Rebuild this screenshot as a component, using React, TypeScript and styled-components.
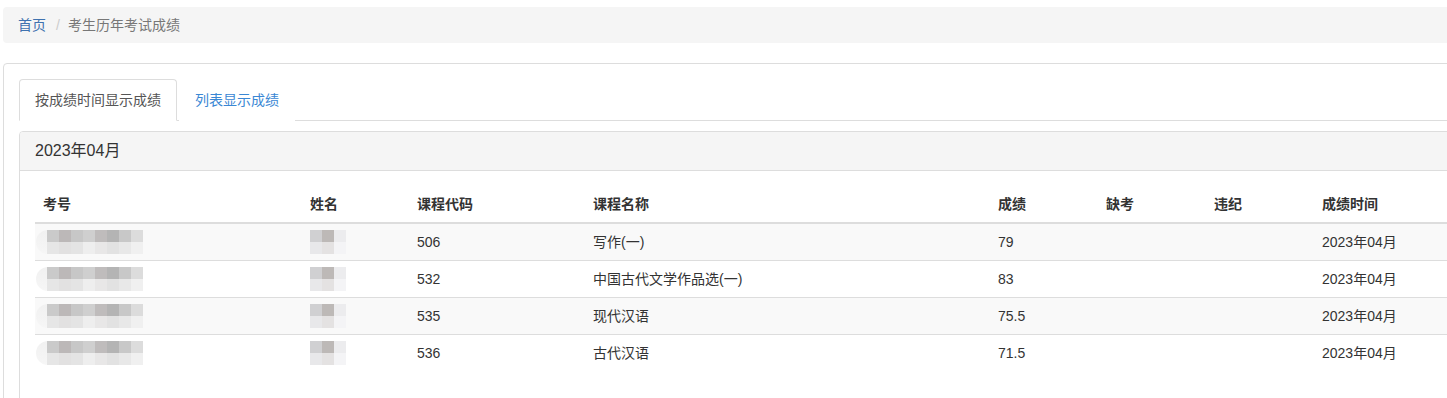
import React from "react";
import styled, { createGlobalStyle } from "styled-components";

const GlobalStyle = createGlobalStyle`
  body {
    margin: 0;
    overflow: hidden;
    background: #fff;
    font-family: "Liberation Sans", "Noto Sans CJK SC", sans-serif;
    font-size: 14px;
    line-height: 20px;
    color: #333;
  }
`;

const Page = styled.div`
  width: 1480px;
  padding: 7px 0 0 3px;
`;

const Breadcrumb = styled.ol`
  list-style: none;
  margin: 0 0 20px;
  padding: 8px 15px;
  background: #f5f5f5;
  border-radius: 4px;
  display: flex;
`;

const Crumb = styled.li<{ $active?: boolean }>`
  color: ${(p) => (p.$active ? "#777" : "#3f72af")};

  &:not(:first-child)::before {
    content: "/";
    color: #ccc;
    padding: 0 8px 0 10px;
  }
`;

const OuterPanel = styled.div`
  border: 1px solid #ddd;
  border-radius: 4px;
  padding: 15px;
  min-height: 400px;
`;

const Tabs = styled.ul`
  list-style: none;
  margin: 0 0 10px;
  padding: 0;
  display: flex;
  border-bottom: 1px solid #ddd;
`;

const Tab = styled.li<{ $active?: boolean }>`
  margin: 0 2px -1px 0;
  padding: 10px 15px;
  border: 1px solid ${(p) => (p.$active ? "#ddd" : "transparent")};
  border-bottom-color: ${(p) => (p.$active ? "#fff" : "transparent")};
  border-radius: 4px 4px 0 0;
  background: #fff;
  color: ${(p) => (p.$active ? "#555" : "#3a87d4")};
`;

const MonthPanel = styled.div`
  border: 1px solid #ddd;
  border-radius: 4px;
`;

const MonthHeading = styled.div`
  padding: 9px 15px;
  background: #f5f5f5;
  border-bottom: 1px solid #ddd;
  border-radius: 3px 3px 0 0;
  font-size: 16px;
  line-height: 20px;
`;

const MonthBody = styled.div`
  padding: 15px;
`;

const Table = styled.table`
  width: 100%;
  margin-bottom: 20px;
  border-collapse: collapse;
  table-layout: fixed;
`;

const Th = styled.th`
  text-align: left;
  font-weight: bold;
  padding: 8px;
  border-bottom: 2px solid #ddd;
`;

const Row = styled.tr`
  &:nth-child(odd) {
    background: #f9f9f9;
  }
`;

const Td = styled.td`
  padding: 8px;
  border-top: 1px solid #ddd;
  height: 20px;
`;

const Mosaic = styled.div<{ $lead: number }>`
  display: flex;
  height: 24px;
  margin: -2px 0;
  padding-left: ${(p) => p.$lead}px;
  border-radius: 12px;
  background: linear-gradient(#f1f1f1, #f6f6f6);
  width: fit-content;
  filter: blur(0.4px);
`;

const MosaicCol = styled.div<{ $top: string; $bottom: string }>`
  width: 12px;
  background: linear-gradient(
    ${(p) => p.$top} 0 50%,
    ${(p) => p.$bottom} 50% 100%
  );
`;

const idCols: [string, string][] = [
  ["#cacaca", "#e6e6e6"],
  ["#bcb8b8", "#e2e1e1"],
  ["#c7c7c7", "#e4e4e4"],
  ["#cfcfcf", "#eeeeee"],
  ["#bfbcbc", "#e8e7e7"],
  ["#b4b4b4", "#e2e2e2"],
  ["#c8c8c8", "#e8e8e8"],
  ["#dcdcdc", "#f0f0f0"],
];

const nameCols: [string, string][] = [
  ["#d0d0d2", "#e8e8ea"],
  ["#bdb9b7", "#e4e2e2"],
  ["#ececee", "#f4f4f6"],
];

const Blur: React.FC<{ cols: [string, string][]; lead: number }> = ({ cols, lead }) => (
  <Mosaic $lead={lead}>
    {cols.map(([t, b], i) => (
      <MosaicCol key={i} $top={t} $bottom={b} />
    ))}
  </Mosaic>
);

const widths = [267, 107, 176, 405, 108, 108, 108];
const headers = ["考号", "姓名", "课程代码", "课程名称", "成绩", "缺考", "违纪", "成绩时间"];

const scores = [
  { code: "506", name: "写作(一)", score: "79" },
  { code: "532", name: "中国古代文学作品选(一)", score: "83" },
  { code: "535", name: "现代汉语", score: "75.5" },
  { code: "536", name: "古代汉语", score: "71.5" },
];

export default function App() {
  return (
    <Page>
      <GlobalStyle />
      <Breadcrumb>
        <Crumb>首页</Crumb>
        <Crumb $active>考生历年考试成绩</Crumb>
      </Breadcrumb>
      <OuterPanel>
        <Tabs>
          <Tab $active>按成绩时间显示成绩</Tab>
          <Tab>列表显示成绩</Tab>
        </Tabs>
        <MonthPanel>
          <MonthHeading>2023年04月</MonthHeading>
          <MonthBody>
            <Table>
              <colgroup>
                {widths.map((w, i) => (
                  <col key={i} style={{ width: w }} />
                ))}
                <col />
              </colgroup>
              <thead>
                <tr>
                  {headers.map((h) => (
                    <Th key={h}>{h}</Th>
                  ))}
                </tr>
              </thead>
              <tbody>
                {scores.map((s) => (
                  <Row key={s.code}>
                    <Td style={{ paddingLeft: 1 }}>
                      <Blur cols={idCols} lead={11} />
                    </Td>
                    <Td>
                      <Blur cols={nameCols} lead={0} />
                    </Td>
                    <Td>{s.code}</Td>
                    <Td>{s.name}</Td>
                    <Td>{s.score}</Td>
                    <Td />
                    <Td />
                    <Td>2023年04月</Td>
                  </Row>
                ))}
              </tbody>
            </Table>
          </MonthBody>
        </MonthPanel>
      </OuterPanel>
    </Page>
  );
}
